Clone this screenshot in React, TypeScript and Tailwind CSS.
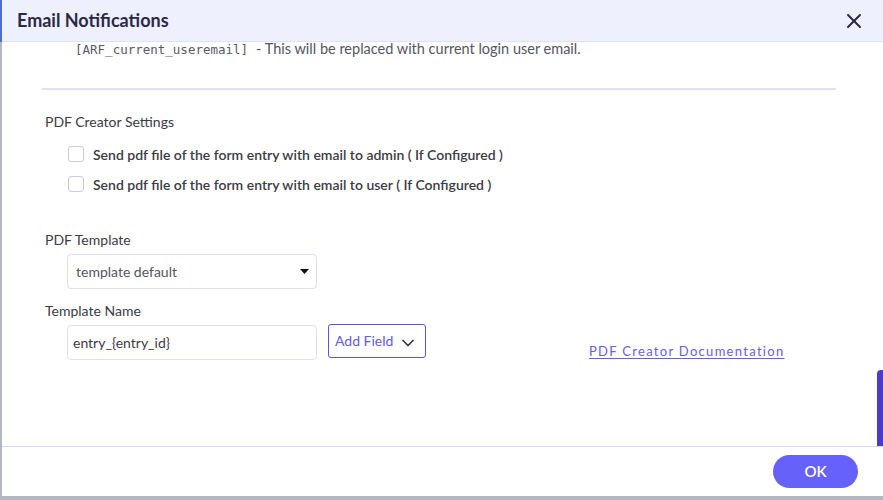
import { X, ChevronDown } from "lucide-react";

const ui = { fontFamily: "Lato, 'Noto Sans', sans-serif" };

function Checkbox({ label }: { label: string }) {
    return (
        <label className="flex items-center h-[30px] ml-[66px] gap-[9px]">
            <span className="block w-[16px] h-[16px] rounded-[3px] border border-[#c9cbd6] bg-white" />
            <span className="text-[14px] font-semibold text-[#3b3b44]">{label}</span>
        </label>
    );
}

export default function App() {
    return (
        <div className="w-[883px] h-[500px] flex flex-col overflow-hidden bg-[#b3b7c0]" style={ui}>
            <div className="flex flex-1 min-h-0">
                {/* page behind the modal, left edge */}
                <div className="w-[2px] flex flex-col">
                    <div className="h-[42px] bg-[#4a6fd0]" />
                    <div className="flex-1 bg-[#b3b7c0]" />
                </div>

                <div className="flex-1 flex flex-col bg-white">
                    {/* header */}
                    <div className="h-[42px] shrink-0 flex items-center justify-between bg-[#eff0fd] border-b border-[#dfe1f4] pl-[15px] pr-[17px]">
                        <h2 className="text-[18px] font-bold text-[#2b2946]">Email Notifications</h2>
                        <X className="w-[24px] h-[24px] text-[#2b2946]" strokeWidth={2} />
                    </div>

                    {/* body */}
                    <div className="flex-1 relative">
                        <p className="ml-[73px] leading-[14px] text-[14.5px] text-[#55555f]">
                            <span style={{ fontFamily: "'DejaVu Sans Mono', monospace" }} className="text-[12.5px] text-[#5a5a64]">[ARF_current_useremail]</span>
                            <span className="ml-[8px]">- This will be replaced with current login user email.</span>
                        </p>

                        <div className="mt-[31px] ml-[40px] w-[794px] h-[2px] bg-[#e0e0f6]" />

                        <div className="mt-[22px] ml-[43px] text-[14px] leading-[20px] text-[#3b3b44]">PDF Creator Settings</div>

                        <div className="mt-[7px]">
                            <Checkbox label="Send pdf file of the form entry with email to admin ( If Configured )" />
                            <Checkbox label="Send pdf file of the form entry with email to user ( If Configured )" />
                        </div>

                        <div className="mt-[31px] ml-[43px] text-[14px] leading-[20px] text-[#3b3b44]">PDF Template</div>
                        <div className="mt-[4px] ml-[65px] w-[250px] h-[35px] flex items-center justify-between border border-[#dfe1f2] rounded-[4px] pl-[8px] pr-[7px]">
                            <span className="text-[14px] text-[#55555f]">template default</span>
                            <svg width="9" height="5" viewBox="0 0 9 5"><path d="M0 0h9L4.5 5z" fill="#111" /></svg>
                        </div>

                        <div className="mt-[12px] ml-[43px] text-[14px] leading-[20px] text-[#3b3b44]">Template Name</div>
                        <div className="mt-[3px] ml-[65px] flex items-start">
                            <div className="w-[250px] h-[35px] mt-[1px] flex items-center border border-[#dfe1f2] rounded-[4px] pl-[5px]">
                                <span className="text-[14px] text-[#3b3b44]">entry_{"{entry_id}"}</span>
                            </div>
                            <div className="ml-[11px] w-[98px] h-[34px] flex items-center justify-between border border-[#5b52e6] rounded-[3px] pl-[6px] pr-[7px]">
                                <span className="text-[14px] text-[#6259ee] -mt-[1px]">Add Field</span>
                                <ChevronDown className="w-[20px] h-[20px] mt-[3px] text-[#333]" strokeWidth={2} />
                            </div>
                            <a className="ml-[163px] mt-[19px] text-[13px] leading-[16px] tracking-[1.3px] text-[#655ee9] underline underline-offset-2">
                                PDF Creator Documentation
                            </a>
                        </div>

                        {/* page scrollbar peeking from behind */}
                        <div className="absolute right-0 top-[328px] w-[6px] h-[76px] bg-[#4b3bc7] rounded-tl-[4px]" />
                    </div>

                    {/* footer */}
                    <div className="h-[50px] shrink-0 border-t border-[#d5dcfb] flex items-center justify-end pr-[25px]">
                        <button className="w-[85px] h-[33px] rounded-full bg-[#6661fb] text-white text-[15px] font-semibold">OK</button>
                    </div>
                </div>
            </div>
            <div className="h-[4px] shrink-0 bg-[#b3b7c0]" />
        </div>
    );
}
